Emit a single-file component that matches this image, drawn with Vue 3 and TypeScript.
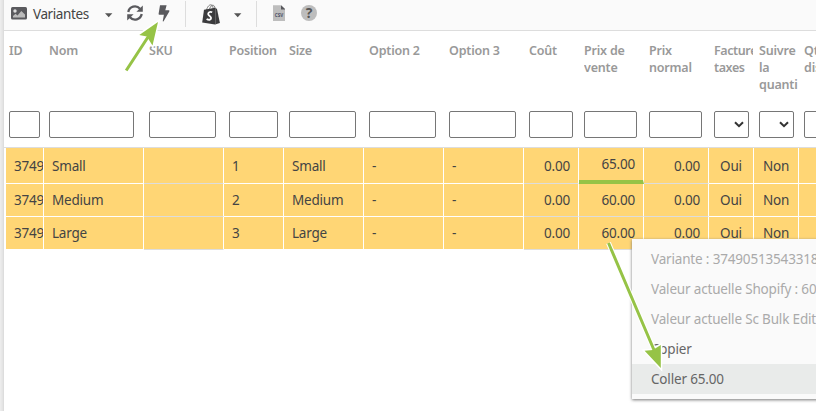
<script setup lang="ts">
type Kind = 'input' | 'select'
interface Column {
  key: string
  label: string
  width: number
  filter: Kind
  field: number
  align?: 'right'
  ruled?: boolean
}

const columns: Column[] = [
  { key: 'id', label: 'ID', width: 40, filter: 'input', field: 31 },
  { key: 'nom', label: 'Nom', width: 100, filter: 'input', field: 85 },
  { key: 'sku', label: 'SKU', width: 80, filter: 'input', field: 67, ruled: true },
  { key: 'position', label: 'Position', width: 60, filter: 'input', field: 49 },
  { key: 'size', label: 'Size', width: 80, filter: 'input', field: 67 },
  { key: 'opt2', label: 'Option 2', width: 80, filter: 'input', field: 67 },
  { key: 'opt3', label: 'Option 3', width: 80, filter: 'input', field: 67 },
  { key: 'cost', label: 'Coût', width: 55, filter: 'input', field: 44, align: 'right', ruled: true },
  { key: 'price', label: 'Prix de vente', width: 65, filter: 'input', field: 53, align: 'right', ruled: true },
  { key: 'normal', label: 'Prix normal', width: 65, filter: 'input', field: 53, align: 'right', ruled: true },
  { key: 'tax', label: 'Facture taxes', width: 45, filter: 'select', field: 35 },
  { key: 'track', label: 'Suivre la quanti', width: 45, filter: 'select', field: 35 },
  { key: 'qty', label: 'Qté dispo', width: 60, filter: 'input', field: 50 },
]

const makeRow = (name: string, position: string, price: string): Record<string, string> => ({
  id: '3749', nom: name, sku: '', position, size: name, opt2: '-', opt3: '-',
  cost: '0.00', price, normal: '0.00', tax: 'Oui', track: 'Non', qty: '',
})
const rows = [makeRow('Small', '1', '65.00'), makeRow('Medium', '2', '60.00'), makeRow('Large', '3', '60.00')]

const menu = [
  { text: 'Variante : 37490513543318', state: 'muted' },
  { text: 'Valeur actuelle Shopify : 60', state: 'muted' },
  { text: 'Valeur actuelle Sc Bulk Edit', state: 'muted' },
  { text: 'Copier', state: '' },
  { text: 'Coller 65.00', state: 'active' },
]
</script>

<template>
  <div class="screen">
    <div class="gutter"></div>
    <main class="panel">
      <header class="toolbar">
        <svg class="ico-image" width="16" height="13" viewBox="0 0 16 13">
          <rect width="16" height="12.5" rx="1.5" fill="#5a5a5e" />
          <circle cx="4" cy="4" r="1.7" fill="#ddd" />
          <path d="M2 10.5V9l2.5-2.3 2 1.7L10.3 4 14 7.5v3z" fill="#bbb" />
        </svg>
        <span class="title">Variantes</span>
        <svg class="caret first" width="8" height="5" viewBox="0 0 8 5"><path d="M0 .3h7.4L3.7 4.2z" fill="#555" /></svg>
        <svg class="ico-refresh" width="16" height="16" viewBox="0 0 16 16">
          <g fill="none" stroke="#5a5a5e" stroke-width="2.3">
            <path d="M1.3 7A6.7 6.7 0 0 1 13 3.8" />
            <path d="M14.7 9A6.7 6.7 0 0 1 3 12.2" />
          </g>
          <path d="M15.8.4v6.4H9.4zM.2 15.6V9.2h6.4z" fill="#5a5a5e" />
        </svg>
        <svg class="ico-bolt" width="12" height="17" viewBox="0 0 12 17">
          <path d="M2 .2h6.6L7.3 5.2h3.4q1.1.1.6 1.2L5.6 16.2q-1 .8-.8-.5L5.9 9.8H1.4Q.4 9.7.6 8.7z" fill="#5a5a5e" />
        </svg>
        <i class="divider one"></i>
        <svg class="ico-bag" width="19" height="21" viewBox="0 0 19 21">
          <path d="M4.5 6C5.5 2.3 7.7.5 9 .9 10.6 1 11 3 11.2 5M7.4 5.4C8.4 2 10.5.6 11.7 1.5c1 .8 1.2 2 1.3 3" fill="none" stroke="#777" />
          <path d="M2 5.8 13.2 3.7 15 5l2.9 14-4.9 1.5L.2 18.6z" fill="#3b3b3d" />
          <path d="m13.5 4 .1 16.2" stroke="#777" stroke-width=".7" />
          <path d="M10.2 8.3C7.8 7.2 6 8.5 6.2 10.1c.2 1.8 2.9 2.1 2.9 4 0 2-2.4 2.1-4.5.8" fill="none" stroke="#fff" stroke-width="1.8" />
        </svg>
        <svg class="caret second" width="8" height="5" viewBox="0 0 8 5"><path d="M0 .3h7.4L3.7 4.2z" fill="#555" /></svg>
        <i class="divider two"></i>
        <svg class="ico-csv" width="12" height="16" viewBox="0 0 12 16">
          <path d="M0 .2h8L12 4v12H0z" fill="#bdbdbd" />
          <path d="M8 .2 12 4v.4H8z" fill="#58585c" />
          <text x="6" y="12" text-anchor="middle" textLength="8.4" lengthAdjust="spacingAndGlyphs">CSV</text>
        </svg>
        <span class="help">?</span>
      </header>

      <div class="headings">
        <div v-for="c in columns" :key="c.key" class="heading" :style="{ width: c.width + 'px' }">
          <div class="label" :class="c.key">{{ c.label }}</div>
          <div class="filter" :style="{ width: c.field + 'px' }">
            <svg v-if="c.filter === 'select'" width="10" height="7" viewBox="0 0 10 7">
              <path d="m1 1.2 4 4 4-4" fill="none" stroke="#333" stroke-width="2" />
            </svg>
          </div>
        </div>
      </div>

      <div class="body">
        <div v-for="(r, i) in rows" :key="i" class="row" :class="{ tall: i === 0 }">
          <div
            v-for="c in columns" :key="c.key" class="cell"
            :class="[c.key, c.align, { ruled: c.ruled, edited: i === 0 && c.key === 'price' }]"
            :style="{ width: (c.key === 'id' ? 38 : c.width) + 'px' }"
          ><span>{{ r[c.key] }}</span></div>
        </div>
      </div>
    </main>

    <div class="menu">
      <div v-for="m in menu" :key="m.text" class="item" :class="m.state">{{ m.text }}</div>
    </div>

    <svg class="arrows" width="816" height="411" viewBox="0 0 816 411">
      <g class="halo">
        <path d="M126.2 70.5 148 37M608.5 243 654 350" />
        <path d="M158 22 139.3 34.9 146.8 36.6 152.5 45.5zM660.8 368 644.6 350.8 652.8 350 660.8 345z" />
      </g>
      <path d="M126.2 70.5 148 37M608.5 243 654 350" class="shaft" />
      <path d="M158 22 139.3 34.9 146.8 36.6 152.5 45.5zM660.8 368 644.6 350.8 652.8 350 660.8 345z" fill="#96c346" />
    </svg>
  </div>
</template>

<style>
body { margin: 0; overflow: hidden; }
</style>

<style scoped>
.screen { position: relative; display: flex; width: 816px; height: 411px; overflow: hidden; background: #fff; color: #444; font: 14px/20px "Noto Sans", "Open Sans", sans-serif; box-sizing: border-box; }
.gutter { flex: none; width: 3px; background: linear-gradient(90deg, #eee, #e2e2e2); border-right: 1px solid #ddd; }
.panel { flex: none; width: 900px; }
.toolbar { display: flex; height: 31px; box-sizing: border-box; background: #fafafa; border-bottom: 1px solid #ddd; }
.toolbar > * { flex: none; }
.ico-image { margin: 7px 0 0 7px; }
.title { width: 57px; margin: 4px 0 0 6px; font-size: 13.5px; letter-spacing: -.4px; white-space: nowrap; }
.caret { margin-top: 13px; }
.first { margin-left: 15px; }
.ico-refresh { margin: 5px 0 0 14px; }
.ico-bolt { margin: 5px 0 0 15px; }
.divider { width: 1px; height: 26px; margin-top: 1px; background: #ddd; }
.one { margin-left: 15px; }
.ico-bag { margin: 4px 0 0 16px; }
.second { margin-left: 13px; }
.two { margin-left: 14px; }
.ico-csv { margin: 5px 0 0 16px; }
.ico-csv text { font: bold 5px "Open Sans", sans-serif; fill: #4c5066; }
.help { width: 16px; height: 16px; margin: 5px 0 0 16px; border-radius: 50%; background: #bdbdbd; color: #555; font: bold 14px/16px "Open Sans", sans-serif; text-align: center; }
.headings { display: flex; height: 116px; border-bottom: 1px solid #ddd; }
.heading { flex: none; box-sizing: border-box; padding: 11px 0 0 5px; }
.label { height: 69px; margin-right: 2px; overflow: hidden; color: #999; font-weight: 600; font-size: 12.5px; line-height: 17px; letter-spacing: -.2px; }
.label.tax, .label.track { width: 39px; margin: 0; }
.label.tax { letter-spacing: -.4px; }
.filter { display: flex; align-items: center; justify-content: flex-end; height: 27px; box-sizing: border-box; border: 1px solid #767676; border-radius: 2px; padding-right: 4px; }
.body { padding-left: 2px; }
.row { display: flex; height: 33px; }
.row.tall { height: 36px; }
.cell { flex: none; box-sizing: border-box; display: flex; align-items: center; padding: 0 8px; overflow: hidden; background: #ffd675; border-right: 1px solid #fff; border-bottom: 1px solid #fff; font-size: 13.5px; letter-spacing: -.2px; }
.tall .cell { padding-top: 1px; }
.cell.ruled { border-bottom-color: #ddd; }
.cell.id { padding-right: 0; }
.cell.right { justify-content: flex-end; }
.cell.tax, .cell.track { justify-content: center; padding-left: 0; padding-right: 0; }
.tall .cell.edited { padding-top: 0; border-bottom: 4px solid #96c346; }
.menu { position: absolute; left: 632px; top: 239px; width: 230px; height: 160px; box-sizing: border-box; padding-top: 5px; background: #fafafa; box-shadow: 0 1px 3px #777; color: #666; }
.item { height: 30px; padding-left: 19px; line-height: 30px; font-size: 13.5px; letter-spacing: -.17px; white-space: nowrap; }
.muted { color: #aaa; }
.active { background: #e9ebea; }
.arrows { position: absolute; left: 0; top: 0; }
.halo path { stroke: #fff; stroke-width: 5; fill: #fff; }
.halo path + path { stroke-width: 3; }
.shaft { fill: none; stroke: #96c346; stroke-width: 3; }
</style>
